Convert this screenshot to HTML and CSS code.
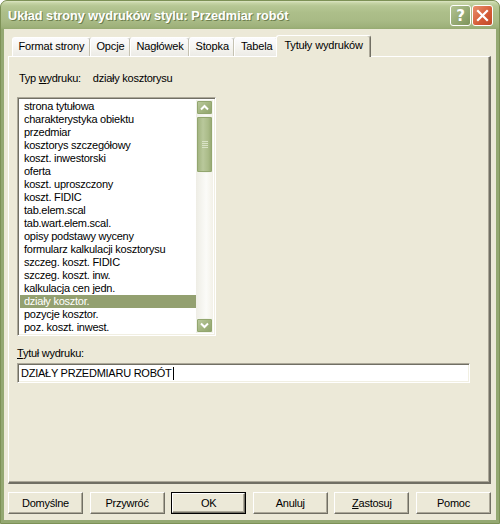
FILE: index.html
```html
<!DOCTYPE html>
<html>
<head>
<meta charset="utf-8">
<link rel="stylesheet" href="styles.css">
</head>
<body>
<div class="window">
  <div class="titlebar">
    <span class="title">Układ strony wydruków stylu: Przedmiar robót</span>
    <div class="tbtns">
      <div class="tbtn help">?</div>
      <div class="tbtn close">
        <svg width="13" height="13" viewBox="0 0 13 13"><path d="M2 2 L11 11 M11 2 L2 11" stroke="#fff" stroke-width="2.2" stroke-linecap="square"/></svg>
      </div>
    </div>
  </div>
  <div class="client">
    <div class="tabs">
      <div class="tab">Format strony</div>
      <div class="tab">Opcje</div>
      <div class="tab">Nagłówek</div>
      <div class="tab">Stopka</div>
      <div class="tab">Tabela</div>
      <div class="tab active">Tytuły wydruków</div>
    </div>
    <div class="panel">
      <div class="typ"><span>Typ <u>w</u>ydruku:</span><span class="typval">działy kosztorysu</span></div>
      <div class="listbox">
        <div class="items">
          <div class="item">strona tytułowa</div>
          <div class="item">charakterystyka obiektu</div>
          <div class="item">przedmiar</div>
          <div class="item">kosztorys szczegółowy</div>
          <div class="item">koszt. inwestorski</div>
          <div class="item">oferta</div>
          <div class="item">koszt. uproszczony</div>
          <div class="item">koszt. FIDIC</div>
          <div class="item">tab.elem.scal</div>
          <div class="item">tab.wart.elem.scal.</div>
          <div class="item">opisy podstawy wyceny</div>
          <div class="item">formularz kalkulacji kosztorysu</div>
          <div class="item">szczeg. koszt. FIDIC</div>
          <div class="item">szczeg. koszt. inw.</div>
          <div class="item">kalkulacja cen jedn.</div>
          <div class="item sel">działy kosztor.</div>
          <div class="item">pozycje kosztor.</div>
          <div class="item">poz. koszt. inwest.</div>
        </div>
        <div class="scrollbar">
          <div class="sbtn"><svg width="9" height="7" viewBox="0 0 9 7"><path d="M1 5.5 L4.5 2 L8 5.5" stroke="#fff" stroke-width="2" fill="none"/></svg></div>
          <div class="thumb"><div class="grip"></div></div>
          <div class="track"></div>
          <div class="sbtn"><svg width="9" height="7" viewBox="0 0 9 7"><path d="M1 1.5 L4.5 5 L8 1.5" stroke="#fff" stroke-width="2" fill="none"/></svg></div>
        </div>
      </div>
      <div class="lbl"><u>T</u>ytuł wydruku:</div>
      <div class="input">DZIAŁY PRZEDMIARU ROBÓT<span class="caret"></span></div>
    </div>
    <div class="buttons">
      <div class="btn">Domyślne</div>
      <div class="btn">Przywróć</div>
      <div class="btn def"><div class="inner">OK</div></div>
      <div class="btn">Anuluj</div>
      <div class="btn"><span><u>Z</u>astosuj</span></div>
      <div class="btn">Pomoc</div>
    </div>
  </div>
</div>
</body>
</html>
```

FILE: styles.css
```css
html, body {
  margin: 0;
  padding: 0;
  background: #fff;
}
body {
  width: 500px;
  height: 524px;
  font-family: "Liberation Sans", Arial, sans-serif;
  font-size: 11px;
  letter-spacing: -0.25px;
  color: #000;
}
.window {
  width: 500px;
  height: 524px;
  box-sizing: border-box;
  background: #94A872;
  border: 1px solid #7D9156;
  border-radius: 7px 7px 0 0;
  display: flex;
  flex-direction: column;
  overflow: hidden;
}
.titlebar {
  height: 28px;
  flex: none;
  display: flex;
  align-items: center;
  justify-content: space-between;
  padding: 0 6px 0 7px;
  background: linear-gradient(to bottom, #DCE5C4 0px, #C6D4A6 2px, #B6C794 5px, #ACBE89 12px, #A8BA85 20px, #9EB17A 26px, #95AA71 28px);
}
.title {
  color: #fff;
  font-family: "Liberation Sans", Arial, sans-serif;
  font-weight: bold;
  font-size: 12.7px;
  letter-spacing: 0;
  text-shadow: 1px 1px 0 #6E7F4E;
  padding-top: 1px;
}
.tbtns {
  display: flex;
  gap: 1px;
  margin-top: 1px;
}
.tbtn {
  width: 19px;
  height: 19px;
  border: 1px solid #fff;
  border-radius: 3px;
  display: flex;
  align-items: center;
  justify-content: center;
  color: #fff;
  font-family: "DejaVu Sans", sans-serif;
  font-weight: bold;
  font-size: 15px;
  letter-spacing: 0;
}
.help {
  background: linear-gradient(135deg, #B3C392, #8DA26A 70%, #7E935B);
}
.close {
  background: linear-gradient(135deg, #E9906E, #D45A35 60%, #C04A28);
}
.client {
  flex: 1;
  margin: 0 3px 3px 3px;
  background: #ECE9D8;
  display: flex;
  flex-direction: column;
  padding: 6px 0 0 0;
}
.tabs {
  display: flex;
  align-items: flex-end;
  height: 21px;
  padding-left: 8px;
  position: relative;
  z-index: 1;
  letter-spacing: -0.15px;
}
.tab {
  height: 18px;
  line-height: 17px;
  padding: 0 5.5px;
  border-top: 1px solid #fff;
  border-left: 1px solid #fff;
  border-right: 1px solid #919B9C;
  border-radius: 3px 3px 0 0;
  box-shadow: inset -1px 0 0 #C5C2B2;
  background: linear-gradient(to bottom, #FCFCFE, #F4F3EE 60%, #ECEBE6);
  white-space: nowrap;
  margin-right: -1px;
}
.tab.active {
  height: 21px;
  line-height: 19px;
  padding: 0 7.5px;
  margin: 0 -1px -1px -2px;
  background: #ECE9D8;
  border-right: 1px solid #716F64;
  box-shadow: inset -1px 0 0 #ACA899;
}
.panel {
  margin: 0 5px 0 4px;
  height: 428px;
  box-sizing: border-box;
  border-top: 1px solid #fff;
  border-left: 1px solid #fff;
  border-right: 2px solid #716F64;
  border-bottom: 2px solid #716F64;
  box-shadow: inset -1px -1px 0 #ACA899;
  padding: 15px 0 0 8px;
}
.typ {
  height: 13px;
  line-height: 13px;
  padding-left: 2px;
  display: flex;
}
.typval {
  margin-left: 12px;
}
.listbox {
  margin-top: 12px;
  width: 199px;
  height: 239px;
  box-sizing: border-box;
  border-top: 1px solid #ACA899;
  border-left: 1px solid #ACA899;
  border-right: 1px solid #fff;
  border-bottom: 1px solid #fff;
  box-shadow: inset 1px 1px 0 #716F64, inset -1px -1px 0 #F1EFE2;
  background: #fff;
  display: flex;
  padding: 2px;
  overflow: hidden;
}
.items {
  flex: 1;
  overflow: hidden;
  min-width: 0;
}
.item {
  height: 13px;
  line-height: 13px;
  padding-left: 4px;
  white-space: nowrap;
}
.item.sel {
  background: #93A070;
  color: #fff;
}
.scrollbar {
  width: 17px;
  flex: none;
  display: flex;
  flex-direction: column;
  background: linear-gradient(to right, #EEEDE5, #FBFBF8 60%, #F3F1E8);
}
.sbtn {
  height: 15px;
  flex: none;
  box-sizing: border-box;
  border: 1px solid #F2F4EC;
  border-radius: 2px;
  background: linear-gradient(135deg, #BCCBA0, #A1B37E 55%, #8EA26B);
  box-shadow: inset 0 0 0 1px #93A66F;
  display: flex;
  align-items: center;
  justify-content: center;
}
.thumb {
  height: 57px;
  flex: none;
  margin-top: 1px;
  box-sizing: border-box;
  border: 1px solid #F2F4EC;
  border-radius: 2px;
  background: linear-gradient(to right, #9FB17C, #B9C89B 40%, #AABB88 75%, #93A66F);
  box-shadow: inset 0 0 0 1px #93A66F;
  display: flex;
  align-items: center;
  justify-content: center;
}
.grip {
  width: 6px;
  height: 7px;
  background: repeating-linear-gradient(to bottom, #D9E2C6 0px, #D9E2C6 1px, transparent 1px, transparent 2px);
}
.track {
  flex: 1;
}
.lbl {
  margin-top: 11px;
  height: 13px;
  line-height: 13px;
}
.input {
  margin-top: 3px;
  width: 453px;
  height: 20px;
  box-sizing: border-box;
  border-top: 1px solid #ACA899;
  border-left: 1px solid #ACA899;
  border-right: 1px solid #fff;
  border-bottom: 1px solid #fff;
  box-shadow: inset 1px 1px 0 #716F64, inset -1px -1px 0 #F1EFE2;
  background: #fff;
  padding: 0 3px;
  display: flex;
  align-items: center;
}
.caret {
  display: inline-block;
  width: 1px;
  height: 13px;
  background: #000;
  margin-left: 1px;
}
.buttons {
  display: flex;
  justify-content: space-between;
  margin: 8px 5px 0 4px;
}
.btn {
  width: 75px;
  height: 22px;
  box-sizing: border-box;
  border-top: 1px solid #fff;
  border-left: 1px solid #fff;
  border-right: 1px solid #716F64;
  border-bottom: 1px solid #716F64;
  box-shadow: inset -1px -1px 0 #ACA899;
  display: flex;
  align-items: center;
  justify-content: center;
  background: #ECE9D8;
}
.btn.def {
  border: 1px solid #000;
  box-shadow: none;
  padding: 0;
}
.btn.def .inner {
  width: 100%;
  height: 100%;
  box-sizing: border-box;
  border-top: 1px solid #fff;
  border-left: 1px solid #fff;
  border-right: 1px solid #716F64;
  border-bottom: 1px solid #716F64;
  box-shadow: inset -1px -1px 0 #ACA899;
  display: flex;
  align-items: center;
  justify-content: center;
}
```
